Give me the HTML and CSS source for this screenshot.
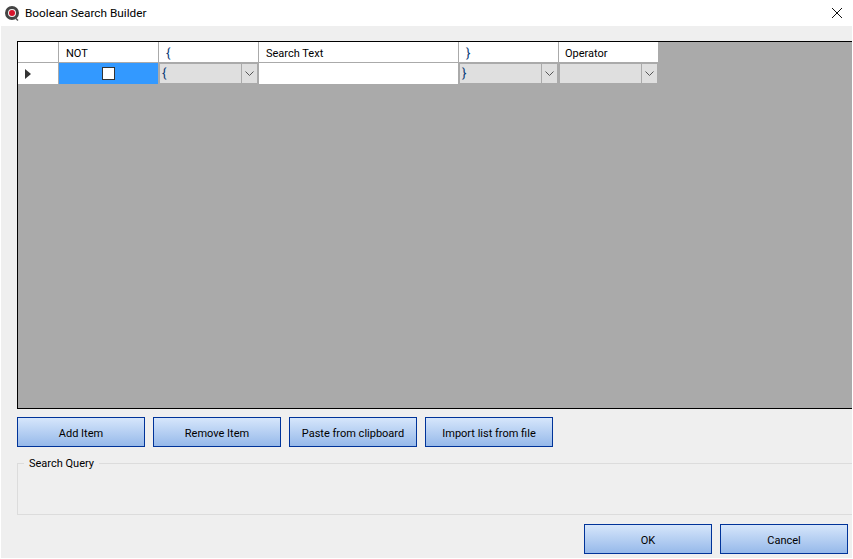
FILE: index.html
```html
<!DOCTYPE html>
<html lang="en">
<head>
<meta charset="utf-8">
<title>Boolean Search Builder</title>
<link rel="stylesheet" href="styles.css">
</head>
<body>
<div class="window">
  <header class="titlebar">
    <svg class="app-icon" width="17" height="17" viewBox="0 0 17 17">
      <circle cx="8" cy="8" r="5.5" fill="#f4f4f4" stroke="#444" stroke-width="3"/>
      <circle cx="8" cy="8" r="3" fill="#d8142c"/>
      <path d="M11 12.5 14 15.5" stroke="#555" stroke-width="1.5"/>
    </svg>
    <span class="title">Boolean Search Builder</span>
    <svg class="close" width="10" height="10" viewBox="0 0 10 10">
      <path d="M0 0l10 10M10 0L0 10" stroke="#111" stroke-width="1" fill="none"/>
    </svg>
  </header>
  <main class="content">
    <section class="grid">
      <div class="row head-row">
        <div class="cell c-head"></div>
        <div class="cell c-sm head">NOT</div>
        <div class="cell c-sm head brace">{</div>
        <div class="cell c-lg head">Search Text</div>
        <div class="cell c-sm head brace">}</div>
        <div class="cell c-sm head head-tight">Operator</div>
      </div>
      <div class="row data-row">
        <div class="cell c-head"><span class="pointer"></span></div>
        <div class="cell c-sm selected"><span class="checkbox"></span></div>
        <div class="cell c-sm combo-cell"><div class="combo"><span class="combo-text">{</span><span class="combo-btn"><svg width="9" height="5" viewBox="0 0 9 5"><path d="M.5.5l4 4 4-4" fill="none" stroke="#555"/></svg></span></div></div>
        <div class="cell c-lg"></div>
        <div class="cell c-sm combo-cell"><div class="combo"><span class="combo-text">}</span><span class="combo-btn"><svg width="9" height="5" viewBox="0 0 9 5"><path d="M.5.5l4 4 4-4" fill="none" stroke="#555"/></svg></span></div></div>
        <div class="cell c-sm combo-cell"><div class="combo"><span class="combo-text"></span><span class="combo-btn"><svg width="9" height="5" viewBox="0 0 9 5"><path d="M.5.5l4 4 4-4" fill="none" stroke="#555"/></svg></span></div></div>
      </div>
    </section>
    <div class="actions">
      <button class="btn">Add Item</button>
      <button class="btn">Remove Item</button>
      <button class="btn">Paste from clipboard</button>
      <button class="btn">Import list from file</button>
    </div>
    <fieldset class="query">
      <legend>Search Query</legend>
    </fieldset>
    <div class="footer">
      <button class="btn">OK</button>
      <button class="btn">Cancel</button>
    </div>
  </main>
</div>
</body>
</html>
```
FILE: styles.css
```css
* { box-sizing: border-box; }
html, body { margin: 0; height: 100%; background: #fff; overflow: hidden; }
body { font: 11px Roboto, "Liberation Sans", Arial, sans-serif; color: #000; }
.window { width: 853px; height: 559px; display: flex; flex-direction: column; }
.titlebar { height: 26px; display: flex; align-items: center; padding: 0 11px 0 4px; flex: none; }
.app-icon { flex: none; }
.title { margin-left: 4px; flex: 1; font-size: 11.8px; }
.close { flex: none; }
.content { height: 532px; margin: 0 1px; padding: 15px 0 0 16px; background: #efefef; display: flex; flex-direction: column; overflow: hidden; }
.grid { width: 836px; height: 368px; flex: none; background: #aaa; border: 1px solid #000; border-right: 0; }
.row { display: flex; }
.head-row { height: 21px; }
.data-row { height: 22px; }
.cell { flex: none; border-right: 1px solid #aaa; border-bottom: 1px solid #aaa; background: #fff; }
.c-head { width: 41px; display: flex; align-items: center; padding-left: 7px; }
.c-sm { width: 100px; }
.c-lg { width: 200px; }
.head { padding: 5px 0 0 7px; line-height: 14px; }
.head-tight { padding-left: 6px; }
.brace { color: #0a3c78; font-size: 13px; padding-top: 4px; }
.pointer { width: 0; height: 0; border-left: 6px solid #333; border-top: 5px solid transparent; border-bottom: 5px solid transparent; }
.selected { background: #3399ff; display: flex; align-items: center; justify-content: center; }
.checkbox { width: 13px; height: 13px; background: #fff; border: 1px solid #333; }
.combo-cell { background: #aaa; padding: 1px; }
.combo { height: 19px; display: flex; background: #dfdfdf; }
.combo-text { flex: 1; padding: 2px 0 0 2px; line-height: 14px; font-size: 13px; color: #0a3c78; }
.combo-btn { width: 16px; border-left: 1px solid #aaa; display: flex; align-items: center; justify-content: center; }
.actions { display: flex; gap: 8px; margin-top: 8px; flex: none; }
.btn { width: 128px; height: 30px; flex: none; padding: 2px 0 0; font: inherit; color: #000; border: 1px solid #003399; border-radius: 0; background: linear-gradient(#d6e6fb, #96b9ea); }
.query { width: 840px; height: 60px; flex: none; margin: 8px 0 0; padding: 0; border: 1px solid #dcdcdc; }
.query legend { margin-left: 6px; padding: 2px 5px 0; line-height: 14px; }
.footer { display: flex; gap: 8px; margin: 9px 0 0 567px; flex: none; }
```
